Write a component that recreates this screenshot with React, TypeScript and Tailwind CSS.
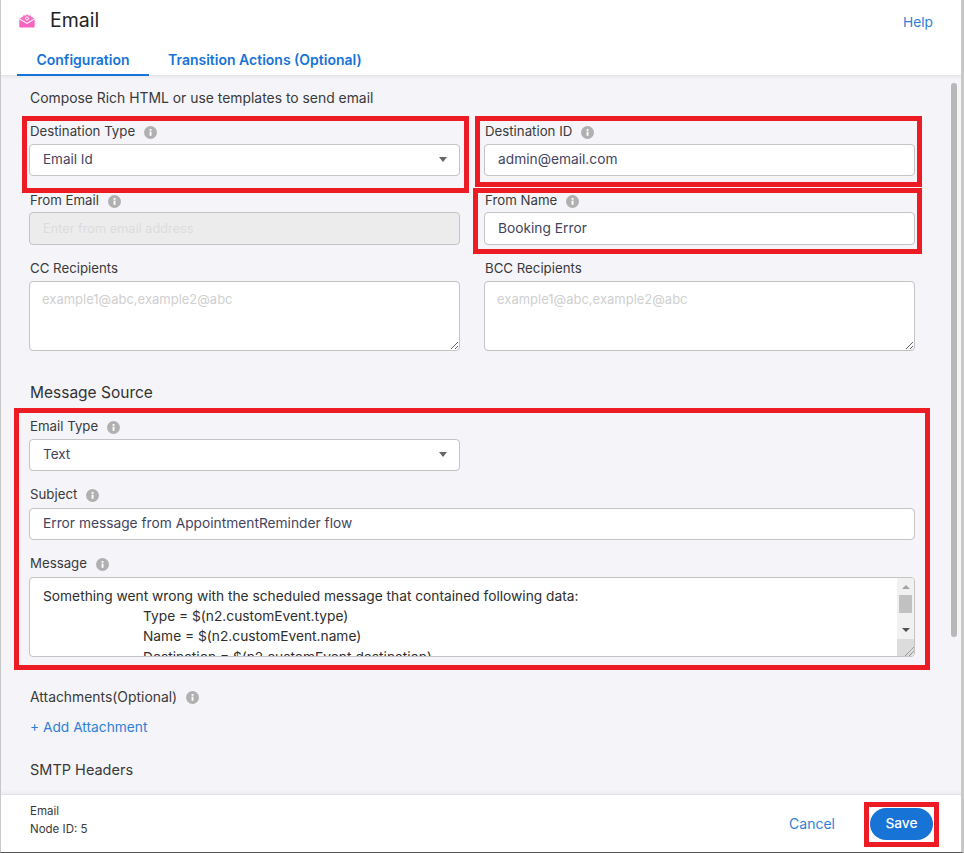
import type { ReactNode } from 'react';

const FONT = "Inter, 'Liberation Sans', sans-serif";

function InfoIcon({ className = '' }: { className?: string }) {
  return (
    <svg viewBox="0 0 13 13" className={`h-[13px] w-[13px] shrink-0 ${className}`}>
      <circle cx="6.5" cy="6.5" r="6.5" fill="#b0b0b0" />
      <rect x="5.6" y="5.6" width="1.9" height="4.2" fill="#fff" />
      <rect x="5.6" y="3" width="1.9" height="1.8" fill="#fff" />
    </svg>
  );
}

function MailIcon() {
  return (
    <svg viewBox="0 0 16 14" className="h-[14px] w-[16px]">
      <path d="M0.5 4.6 L4 2.6 V1.6 H6.2 L8 0.4 L9.8 1.6 H12 V2.6 L15.5 4.6 L8 8.8 Z" fill="#f472c4" />
      <path d="M0.3 5.6 L8 10 L15.7 5.6 V12.4 Q15.7 13.4 14.7 13.4 H1.3 Q0.3 13.4 0.3 12.4 Z" fill="#f765c0" />
      <circle cx="8" cy="4.4" r="1.5" fill="none" stroke="#fff" strokeWidth="0.8" />
    </svg>
  );
}

function Field({
  label,
  info = true,
  labelClass = 'mb-[2px] h-[21px] pt-[1px]',
  children
}: {
  label: string;
  info?: boolean;
  labelClass?: string;
  children: ReactNode;
}) {
  return (
    <div className="min-w-0">
      <div className={`flex items-center pl-[1px] text-[13.25px] text-[#3a3a3a] ${labelClass}`}>
        <span>{label}</span>
        {info && <InfoIcon className="ml-[9px]" />}
      </div>
      {children}
    </div>
  );
}

function TextBox({ value }: { value: string }) {
  return (
    <div className="flex h-[32px] items-center rounded-[4px] border border-[#c4c4c4] bg-white px-[13px] pb-[1px] text-[13.75px] text-[#44445f]">
      {value}
    </div>
  );
}

function SelectBox({ value }: { value: string }) {
  return (
    <div className="flex h-[32px] items-center justify-between rounded-[4px] border border-[#c4c4c4] bg-white pb-[1px] pl-[13px] pr-[12px] text-[13.5px] text-[#44445f]">
      <span>{value}</span>
      <svg viewBox="0 0 8 5" className="h-[5px] w-[8px]">
        <path d="M0 0 H8 L4 5 Z" fill="#666" />
      </svg>
    </div>
  );
}

function RecipientBox({ placeholder }: { placeholder: string }) {
  return (
    <textarea
      readOnly
      placeholder={placeholder}
      className="block h-[70px] w-full rounded-[4px] border border-[#c4c4c4] bg-white px-[12px] py-[8px] text-[13px] outline-none placeholder:text-[#d0d0d0]"
    />
  );
}

function MessageBox() {
  return (
    <div className="relative flex h-[80px] overflow-hidden rounded-[4px] border border-[#c4c4c4] bg-white">
      <div className="flex-1 overflow-hidden whitespace-pre pl-[13px] pt-[8px] text-[13.75px] leading-[20.2px] text-[#2e2e2e]">
        <div>Something went wrong with the scheduled message that contained following data:</div>
        <div className="pl-[100px]">Type = $(n2.customEvent.type)</div>
        <div className="pl-[100px]">Name = $(n2.customEvent.name)</div>
        <div className="pl-[100px]">Destination = $(n2.customEvent.destination)</div>
      </div>
      <div className="flex w-[17px] flex-col bg-[#f1f1f1]">
        <div className="flex h-[17px] items-center justify-center">
          <svg viewBox="0 0 8 4" className="h-[4px] w-[8px]">
            <path d="M0 4 H8 L4 0 Z" fill="#a3a3a3" />
          </svg>
        </div>
        <div className="mx-auto h-[18px] w-[13px] bg-[#c1c1c1]" />
        <div className="flex h-[19px] items-end justify-center">
          <svg viewBox="0 0 8 4" className="h-[4px] w-[8px]">
            <path d="M0 0 H8 L4 4 Z" fill="#505050" />
          </svg>
        </div>
        <div className="mt-auto flex h-[17px] items-end justify-end bg-[#dcdcdc]">
          <svg viewBox="0 0 10 10" className="h-[10px] w-[10px]">
            <path d="M1 10 L10 1 M5 10 L10 5" stroke="#555" strokeWidth="0.8" strokeDasharray="1 0.6" />
          </svg>
        </div>
      </div>
    </div>
  );
}

function Mark({ className }: { className: string }) {
  return <div className={`pointer-events-none absolute z-20 border-[5px] border-[#ed1c24] ${className}`} />;
}

export default function App() {
  return (
    <div
      className="relative flex h-[853px] w-[964px] flex-col overflow-hidden border-b border-l border-r-[3px] border-[#c8c8c8] border-b-[#555] bg-white"
      style={{ fontFamily: FONT }}
    >
      <header className="relative z-10 h-[76px] shrink-0 border-b border-[#e4e4e4] bg-white shadow-[0_1px_4px_rgba(0,0,0,0.06)]">
        <div className="flex items-start justify-between pl-[18px] pr-[28px]">
          <div className="flex items-center pt-[9px]">
            <MailIcon />
            <span className="ml-[15px] -mt-[1px] text-[19.5px] leading-[24px] text-[#222]">Email</span>
          </div>
          <a className="pt-[13px] text-[13.75px] leading-[18px] text-[#2f7fd8]">Help</a>
        </div>
        <nav className="absolute bottom-[-1px] left-[16px] flex text-[14px] font-semibold text-[#1773d6]">
          <span className="w-[132px] border-b-2 border-[#1773d6] pb-[5px] text-center leading-[18px]">Configuration</span>
          <span className="ml-[19px] leading-[18px]">Transition Actions (Optional)</span>
        </nav>
      </header>

      <main className="flex-1 overflow-hidden bg-[#f4f4f9] pl-[28px] pr-[46px] pt-[12px]">
        <p className="pl-[1px] text-[13.9px] leading-[20px] text-[#3a3a3a]">Compose Rich HTML or use templates to send email</p>

        <div className="mt-[13px] grid grid-cols-2 gap-x-[24px] gap-y-[13px]">
          <Field label="Destination Type">
            <SelectBox value="Email Id" />
          </Field>
          <Field label="Destination ID">
            <TextBox value="admin@email.com" />
          </Field>
          <Field label="From Email" labelClass="mb-[1px] h-[22px] pt-[2px]">
            <div className="flex h-[33px] items-center rounded-[4px] border border-[#c4c4c4] bg-[#ececec] px-[13px] text-[12.75px] text-[#dcdcdc]">
              Enter from email address
            </div>
          </Field>
          <Field label="From Name" labelClass="mb-[1px] h-[22px] pt-[2px]">
            <div className="flex h-[33px] items-center rounded-[4px] border border-[#c4c4c4] bg-white px-[13px] text-[13.75px] text-[#44445f]">
              Booking Error
            </div>
          </Field>
          <Field label="CC Recipients" info={false}>
            <RecipientBox placeholder="example1@abc,example2@abc" />
          </Field>
          <Field label="BCC Recipients" info={false}>
            <RecipientBox placeholder="example1@abc,example2@abc" />
          </Field>
        </div>

        <h2 className="mt-[30px] pl-[1px] text-[15.5px] leading-[24px] text-[#333]">Message Source</h2>

        <div className="mt-[11px] w-[431px]">
          <Field label="Email Type">
            <SelectBox value="Text" />
          </Field>
        </div>
        <div className="mt-[14px] w-[886px]">
          <Field label="Subject" labelClass="mb-[3px] h-[20px]">
            <TextBox value="Error message from AppointmentReminder flow" />
          </Field>
        </div>
        <div className="mt-[14px] w-[886px]">
          <Field label="Message" labelClass="mb-[3px] h-[20px]">
            <MessageBox />
          </Field>
        </div>

        <div className="mt-[30px] flex h-[20px] items-center pl-[1px] text-[13.9px] text-[#3a3a3a]">
          <span>Attachments(Optional)</span>
          <InfoIcon className="ml-[9px]" />
        </div>
        <a className="mt-[10px] block pl-[1px] text-[13.75px] leading-[20px] text-[#2f7fd8]">+ Add Attachment</a>
        <h3 className="mt-[23px] pl-[1px] text-[14.5px] leading-[20px] text-[#3a3a3a]">SMTP Headers</h3>
      </main>

      <footer className="relative z-10 flex h-[58px] shrink-0 items-center justify-between border-t border-[#e4e4e4] bg-white pl-[29px] pr-[28px] shadow-[0_-1px_4px_rgba(0,0,0,0.05)]">
        <div className="mb-[8px] text-[11.5px] leading-[18px] text-[#3a3a3a]">
          <div>Email</div>
          <div>Node ID: 5</div>
        </div>
        <div className="flex items-center">
          <a className="text-[14px] text-[#2f7fd8]">Cancel</a>
          <button className="ml-[35px] h-[32px] w-[63px] rounded-full bg-[#1773d6] text-[13.75px] font-medium text-white">
            Save
          </button>
        </div>
      </footer>

      {/* page scrollbar */}
      <div className="absolute left-[950px] top-[83px] h-[554px] w-[6px] rounded-full bg-[#b8b8b8]" />

      {/* reviewer's red marks over the form */}
      <Mark className="left-[21px] top-[116px] h-[77px] w-[447px]" />
      <Mark className="left-[474px] top-[116px] h-[71px] w-[447px]" />
      <Mark className="left-[472px] top-[188px] h-[66px] w-[449px]" />
      <Mark className="left-[13px] top-[408px] h-[262px] w-[916px]" />
      <Mark className="left-[863px] top-[802px] h-[45px] w-[75px]" />
    </div>
  );
}
